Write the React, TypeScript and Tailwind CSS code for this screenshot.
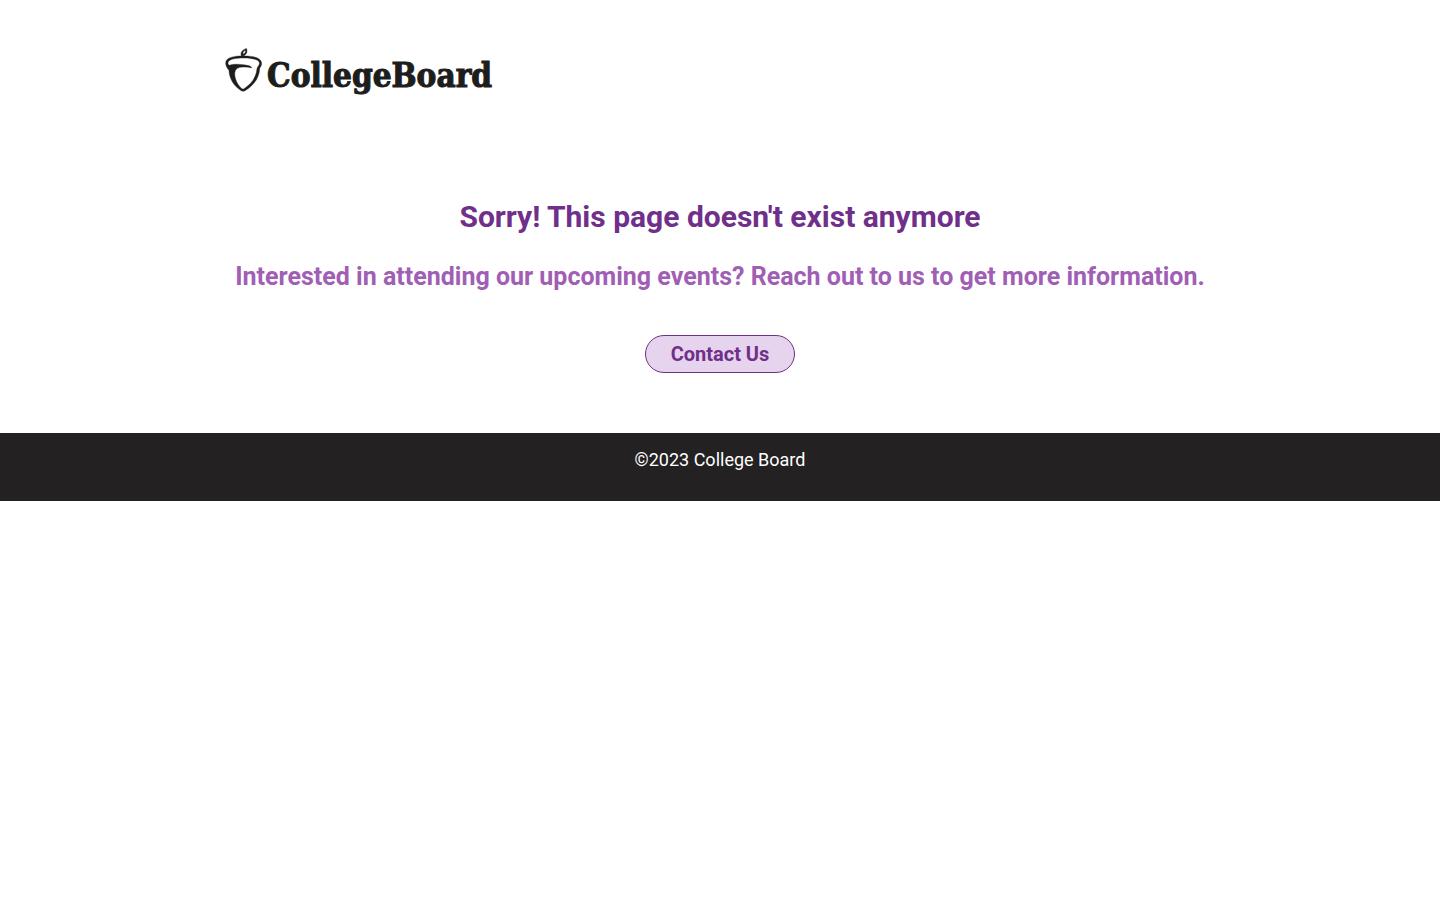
export default function App() {
  return (
    <div className="bg-white font-['Roboto',sans-serif]">
      <header className="mx-auto w-full max-w-[1000px] px-[5px] pt-12">
        <a href="#" aria-label="CollegeBoard" className="inline-flex h-12 items-start gap-1 text-[#1d1d1b]">
          <svg viewBox="0 0 38 46" className="h-[46px] w-[38px] shrink-0" aria-hidden="true">
            <path
              fill="currentColor"
              stroke="currentColor"
              strokeWidth="0.4"
              fillRule="evenodd"
              d="M16.4 7.9C15 4.3 17.4 1.7 21.4 .4C22.9 3.8 21.5 6.9 18.2 8C26 7.8 33 9.2 35.4 12.2C37.3 14.7 36.8 17.3 34.7 20.2C34.4 28.8 29.6 37 20.4 42.5C18.8 43.5 17.4 43.5 15.9 42.5C8.6 37.8 4.4 30.8 3.9 22.1C1.2 19.4 -.1 15.8 1.3 12.6C3.2 9.2 9.6 8.1 16.4 7.9ZM18 6.2C19.9 5.5 20.8 4.2 20.4 2.3C18.5 3.2 17.6 4.5 18 6.2ZM4.4 17.3C8.2 15.9 13.6 16 18.8 16.8C23.5 17.4 26.7 18.2 26.6 19.9C24.4 19.3 20.8 19 17.6 19.1C13.7 19.3 11 20.6 10.3 22.7C9 26 10.1 31 12.4 35.2C14 38.1 16 40.4 18.1 41.2C26.1 36.5 31 29.7 31.9 21.3C32 19.9 32.6 19.3 33.4 18C34.8 16.1 34.8 14.6 33.6 13.2C31.5 11 25 9.9 18.1 10C11.1 10 5 11 3.5 13.6C2.7 15 2.8 16.2 4.4 17.3Z"
            />
          </svg>
          <span className="pt-[10px] font-['DejaVu_Serif_Condensed','DejaVu_Serif',serif] text-[33px] leading-9 font-bold [-webkit-text-stroke:1px_#1d1d1b]">
            CollegeBoard
          </span>
        </a>
      </header>
      <main className="flex flex-col items-center px-4 pt-[97px] pb-[60px] text-center">
        <h1 className="text-[30px] leading-[38px] font-bold text-[#702f8a]">
          Sorry! This page doesn't exist anymore
        </h1>
        <h2 className="mt-6 text-[25px] leading-[34px] font-bold text-[#a05eb5]">
          Interested in attending our upcoming events? Reach out to us to get more information.
        </h2>
        <a
          href="#"
          className="mt-[41px] rounded-full border border-[#702f8a] bg-[#e6d3ed] px-[25px] py-1 text-xl leading-7 font-bold text-[#702f8a]"
        >
          Contact Us
        </a>
      </main>
      <footer className="bg-[#232122] px-4 pt-[13px] pb-[27px] text-center text-lg leading-7 text-white">
        <p>©2023 College Board</p>
      </footer>
    </div>
  );
}
